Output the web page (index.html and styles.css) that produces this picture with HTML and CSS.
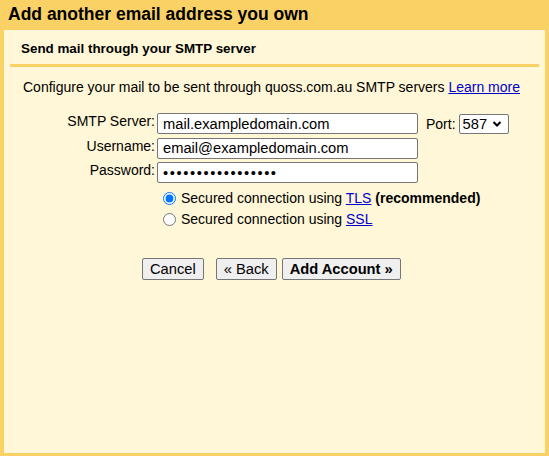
FILE: index.html
```html
<!DOCTYPE html>
<html>
<head>
<meta charset="utf-8">
<link rel="stylesheet" href="styles.css">
</head>
<body>
<div class="title">Add another email address you own</div>
<div class="panel">
  <div class="section-head">Send mail through your SMTP server</div>
  <div class="rule"></div>
  <p class="intro">Configure your mail to be sent through quoss.com.au SMTP servers <a href="#">Learn more</a></p>
  <div class="form">
    <div class="label">SMTP Server:</div>
    <div class="field">
      <input class="text" type="text" value="mail.exampledomain.com">
      <span class="port-label">Port:</span>
      <span class="select">587<svg width="10" height="8" viewBox="0 0 10 8"><path d="M1.5 2 L5 5.5 L8.5 2" fill="none" stroke="#000" stroke-width="2"/></svg></span>
    </div>
    <div class="label">Username:</div>
    <div class="field"><input class="text" type="text" value="email@exampledomain.com"></div>
    <div class="label">Password:</div>
    <div class="field"><input class="text pw" type="password" value="passwordpassword1"></div>
    <div></div>
    <div class="radios">
      <label class="radio"><input type="radio" name="sec" checked>Secured connection using <a href="#">TLS</a> <b>(recommended)</b></label>
      <label class="radio"><input type="radio" name="sec">Secured connection using <a href="#">SSL</a></label>
    </div>
  </div>
  <div class="buttons">
    <button class="btn">Cancel</button>
    <button class="btn back">« Back</button>
    <button class="btn primary">Add Account »</button>
  </div>
</div>
</body>
</html>
```
FILE: styles.css
```css
html, body {
  margin: 0;
  padding: 0;
  height: 100%;
}
body {
  background: #fad165;
  font-family: "Liberation Sans", Arial, sans-serif;
  font-size: 14px;
  color: #000;
  overflow: hidden;
}
.title {
  height: 30px;
  line-height: 29px;
  padding-left: 8px;
  font-size: 17.5px;
  font-weight: bold;
  box-sizing: border-box;
}
.panel {
  background: #fff7d7;
  margin: 0 4px;
  height: 423px;
  box-sizing: border-box;
  padding-top: 1px;
}
.section-head {
  font-weight: bold;
  font-size: 13.4px;
  padding: 10px 0 0 17px;
  height: 23px;
  line-height: 16px;
}
.rule {
  height: 3px;
  background: #fad165;
  margin: 0 6px;
}
.intro {
  margin: 12px 0 0 19px;
  line-height: 16px;
}
a {
  color: #0000cc;
  text-decoration: underline;
}
.form {
  display: grid;
  grid-template-columns: 151px auto;
  column-gap: 2px;
  row-gap: 3.5px;
  margin-top: 18px;
}
.label {
  text-align: right;
  line-height: 17px;
}
.field {
  display: flex;
  align-items: center;
  height: 21px;
}
.text {
  width: 261px;
  height: 21px;
  box-sizing: border-box;
  border: 1px solid #767676;
  border-radius: 2px;
  background: #fff;
  font-family: "Liberation Sans", Arial, sans-serif;
  font-size: 14.7px;
  padding: 0 5px;
  margin: 0;
  color: #000;
}
.pw {
  letter-spacing: 1.6px;
}
.port-label {
  margin-left: 8px;
}
.select {
  margin-left: 3px;
  height: 20px;
  box-sizing: border-box;
  border: 1px solid #767676;
  border-radius: 2px;
  background: #fff;
  font-size: 14.7px;
  padding: 0 3px;
  display: inline-flex;
  align-items: center;
  gap: 5px;
  width: 50px;
}
.radios {
  display: flex;
  flex-direction: column;
  padding-top: 3px;
  gap: 4px;
}
.radio {
  display: block;
  height: 17px;
  line-height: 17px;
}
.radio input {
  margin: 0 5px 0 6px;
  width: 13px;
  height: 13px;
  vertical-align: -2px;
}
.buttons {
  display: flex;
  margin: 30px 0 0 138px;
  gap: 5px;
}
.btn {
  height: 22px;
  box-sizing: border-box;
  border: 1px solid #767676;
  border-radius: 2px;
  background: #efefef;
  font-family: "Liberation Sans", Arial, sans-serif;
  font-size: 14.7px;
  padding: 0 7px;
  color: #000;
}
.back {
  margin-left: 7px;
}
.primary {
  font-weight: bold;
}
```
